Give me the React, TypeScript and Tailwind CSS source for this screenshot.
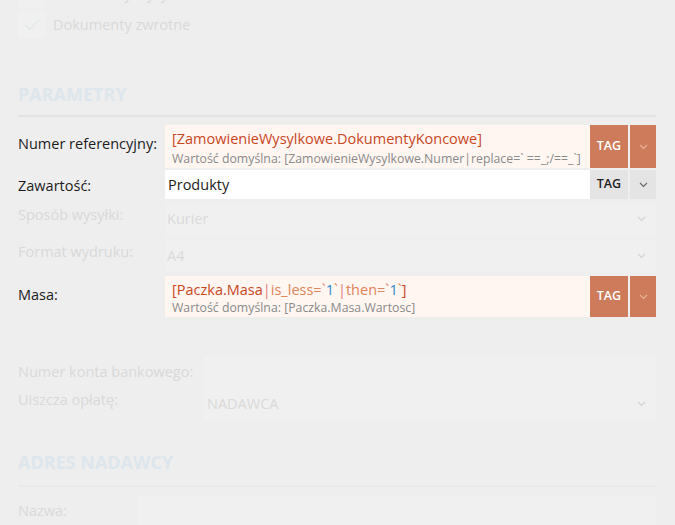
import React from 'react';

const font = { fontFamily: '"Open Sans", "Noto Sans", sans-serif' };

const Chevron = ({ className = '' }: { className?: string }) => (
  <svg width="9" height="6" viewBox="0 0 9 6" className={className} fill="none">
    <path d="M1 1l3.5 3.5L8 1" stroke="currentColor" strokeWidth="1.1" />
  </svg>
);

const TagButtons = ({ active }: { active: boolean }) => (
  <div className="flex shrink-0 self-stretch">
    <div
      className={`w-[38px] flex items-center justify-center text-[12.5px] font-semibold ${
        active ? 'bg-[#cd7b5a] text-white' : 'bg-[#e4e4e4] text-[#222]'
      }`}
    >
      TAG
    </div>
    <div
      className={`w-[26px] ml-[2px] flex items-center justify-center ${
        active ? 'bg-[#cd7b5a] text-[#eab39a]' : 'bg-[#e4e4e4] text-[#666]'
      }`}
    >
      <Chevron />
    </div>
  </div>
);

const FadedSelect = ({ label, value }: { label: string; value: string }) => (
  <div className="flex h-[32px] items-stretch">
    <div className="w-[147px] shrink-0 flex items-center text-[14.5px] text-[#d9d9d9] pb-[8px]">{label}</div>
    <div className="flex-1 bg-[#f0f0f0] flex items-center justify-between pl-[2px] pr-[10px] text-[14.5px] text-[#dadada]">
      <span>{value}</span>
      <Chevron className="text-[#d2d2d2]" />
    </div>
  </div>
);

const Check = () => (
  <div className="w-[27px] h-[27px] bg-[#f0f0f0] flex items-center justify-center text-[#dfe8e8]">
    <svg width="16" height="12" viewBox="0 0 16 12" fill="none">
      <path d="M1 6l4.5 4.5L15 1" stroke="currentColor" strokeWidth="1.2" />
    </svg>
  </div>
);

export default function App() {
  return (
    <div className="w-[675px] h-[525px] overflow-hidden bg-[#eeeeee]" style={font}>
      <div className="pl-[18px] pr-[19px] -mt-[20px]">
        {/* checkboxes */}
        <div className="flex flex-col gap-[4px]">
          <div className="flex items-center gap-[8px] h-[27px]">
            <Check />
            <span className="text-[14.5px] text-[#d9d9d9]">Dokumenty wysyłkowe</span>
          </div>
          <div className="flex items-center gap-[8px] h-[27px]">
            <Check />
            <span className="text-[14.5px] text-[#d9d9d9]">Dokumenty zwrotne</span>
          </div>
        </div>

        {/* PARAMETRY */}
        <div className="mt-[46px] text-[18px] font-bold text-[#dde6ec] leading-[20px]">PARAMETRY</div>
        <div className="mt-[11px] h-[2px] bg-[#e3e3e3]" />

        <div className="mt-[8px] flex flex-col">
          {/* Numer referencyjny */}
          <div className="flex h-[43px]">
            <div className="w-[147px] shrink-0 flex items-center text-[14.5px] text-[#1c1c1c] pb-[5px]">Numer referencyjny:</div>
            <div className="flex-1 min-w-0 bg-[#fff6f2] pl-[7px] pt-[4px] overflow-hidden">
              <div className="text-[14.5px] leading-[20px] text-[#c9471f] whitespace-nowrap">[ZamowienieWysylkowe.DokumentyKoncowe]</div>
              <div className="mt-[1px] text-[12.3px] leading-[17px] text-[#8a8a8a] whitespace-nowrap">
                Wartość domyślna: [ZamowienieWysylkowe.Numer|replace=` ==_;/==_`]
              </div>
            </div>
            <TagButtons active />
          </div>

          {/* Zawartość */}
          <div className="flex h-[29px] mt-[2px]">
            <div className="w-[147px] shrink-0 flex items-center text-[14.5px] text-[#1c1c1c] pt-[2px]">Zawartość:</div>
            <div className="flex-1 bg-white pl-[3px] flex items-center text-[14.5px] text-[#1c1c1c]">Produkty</div>
            <TagButtons active={false} />
          </div>

          <div className="mt-[4px] flex flex-col gap-[5px]">
            <FadedSelect label="Sposób wysyłki:" value="Kurier" />
            <FadedSelect label="Format wydruku:" value="A4" />
          </div>

          {/* Masa */}
          <div className="flex h-[41px] mt-[4px]">
            <div className="w-[147px] shrink-0 flex items-center text-[14.5px] text-[#1c1c1c] pb-[3px]">Masa:</div>
            <div className="flex-1 min-w-0 bg-[#fff6f2] pl-[7px] pt-[4px] overflow-hidden">
              <div className="text-[14.5px] leading-[20px] whitespace-nowrap">
                <span className="text-[#c9471f]">[Paczka.Masa</span>
                <span className="text-[#e57c7c]">|</span>
                <span className="text-[#df8559]">is_less=`</span>
                <span className="text-[#2f8ccc]">1</span>
                <span className="text-[#df8559]">`</span>
                <span className="text-[#e57c7c]">|</span>
                <span className="text-[#df8559]">then=`</span>
                <span className="text-[#2f8ccc]">1</span>
                <span className="text-[#df8559]">`</span>
                <span className="text-[#c9471f]">]</span>
              </div>
              <div className="text-[12.3px] leading-[16px] text-[#8a8a8a] whitespace-nowrap">
                Wartość domyślna: [Paczka.Masa.Wartosc]
              </div>
            </div>
            <TagButtons active />
          </div>

          {/* Numer konta bankowego */}
          <div className="flex h-[29px] mt-[40px]">
            <div className="w-[186px] shrink-0 flex items-center text-[14.5px] text-[#d9d9d9]">Numer konta bankowego:</div>
            <div className="flex-1 bg-[#f0f0f0]" />
          </div>
          <div className="flex h-[33px] mt-[1px]">
            <div className="w-[186px] shrink-0 flex items-center text-[14.5px] text-[#d9d9d9] pb-[8px]">Uiszcza opłatę:</div>
            <div className="flex-1 bg-[#f0f0f0] flex items-center justify-between pl-[3px] pr-[10px] text-[14.5px] text-[#d9d9d9]">
              <span>NADAWCA</span>
              <Chevron className="text-[#d2d2d2]" />
            </div>
          </div>
        </div>

        {/* ADRES NADAWCY */}
        <div className="mt-[32px] text-[18px] font-bold text-[#dde6ec] leading-[20px]">ADRES NADAWCY</div>
        <div className="mt-[13px] h-[2px] bg-[#e8e8e8]" />
        <div className="flex h-[32px] mt-[8px]">
          <div className="w-[120px] shrink-0 flex items-center text-[14.5px] text-[#d9d9d9]">Nazwa:</div>
          <div className="flex-1 bg-[#f0f0f0]" />
        </div>
      </div>
    </div>
  );
}
